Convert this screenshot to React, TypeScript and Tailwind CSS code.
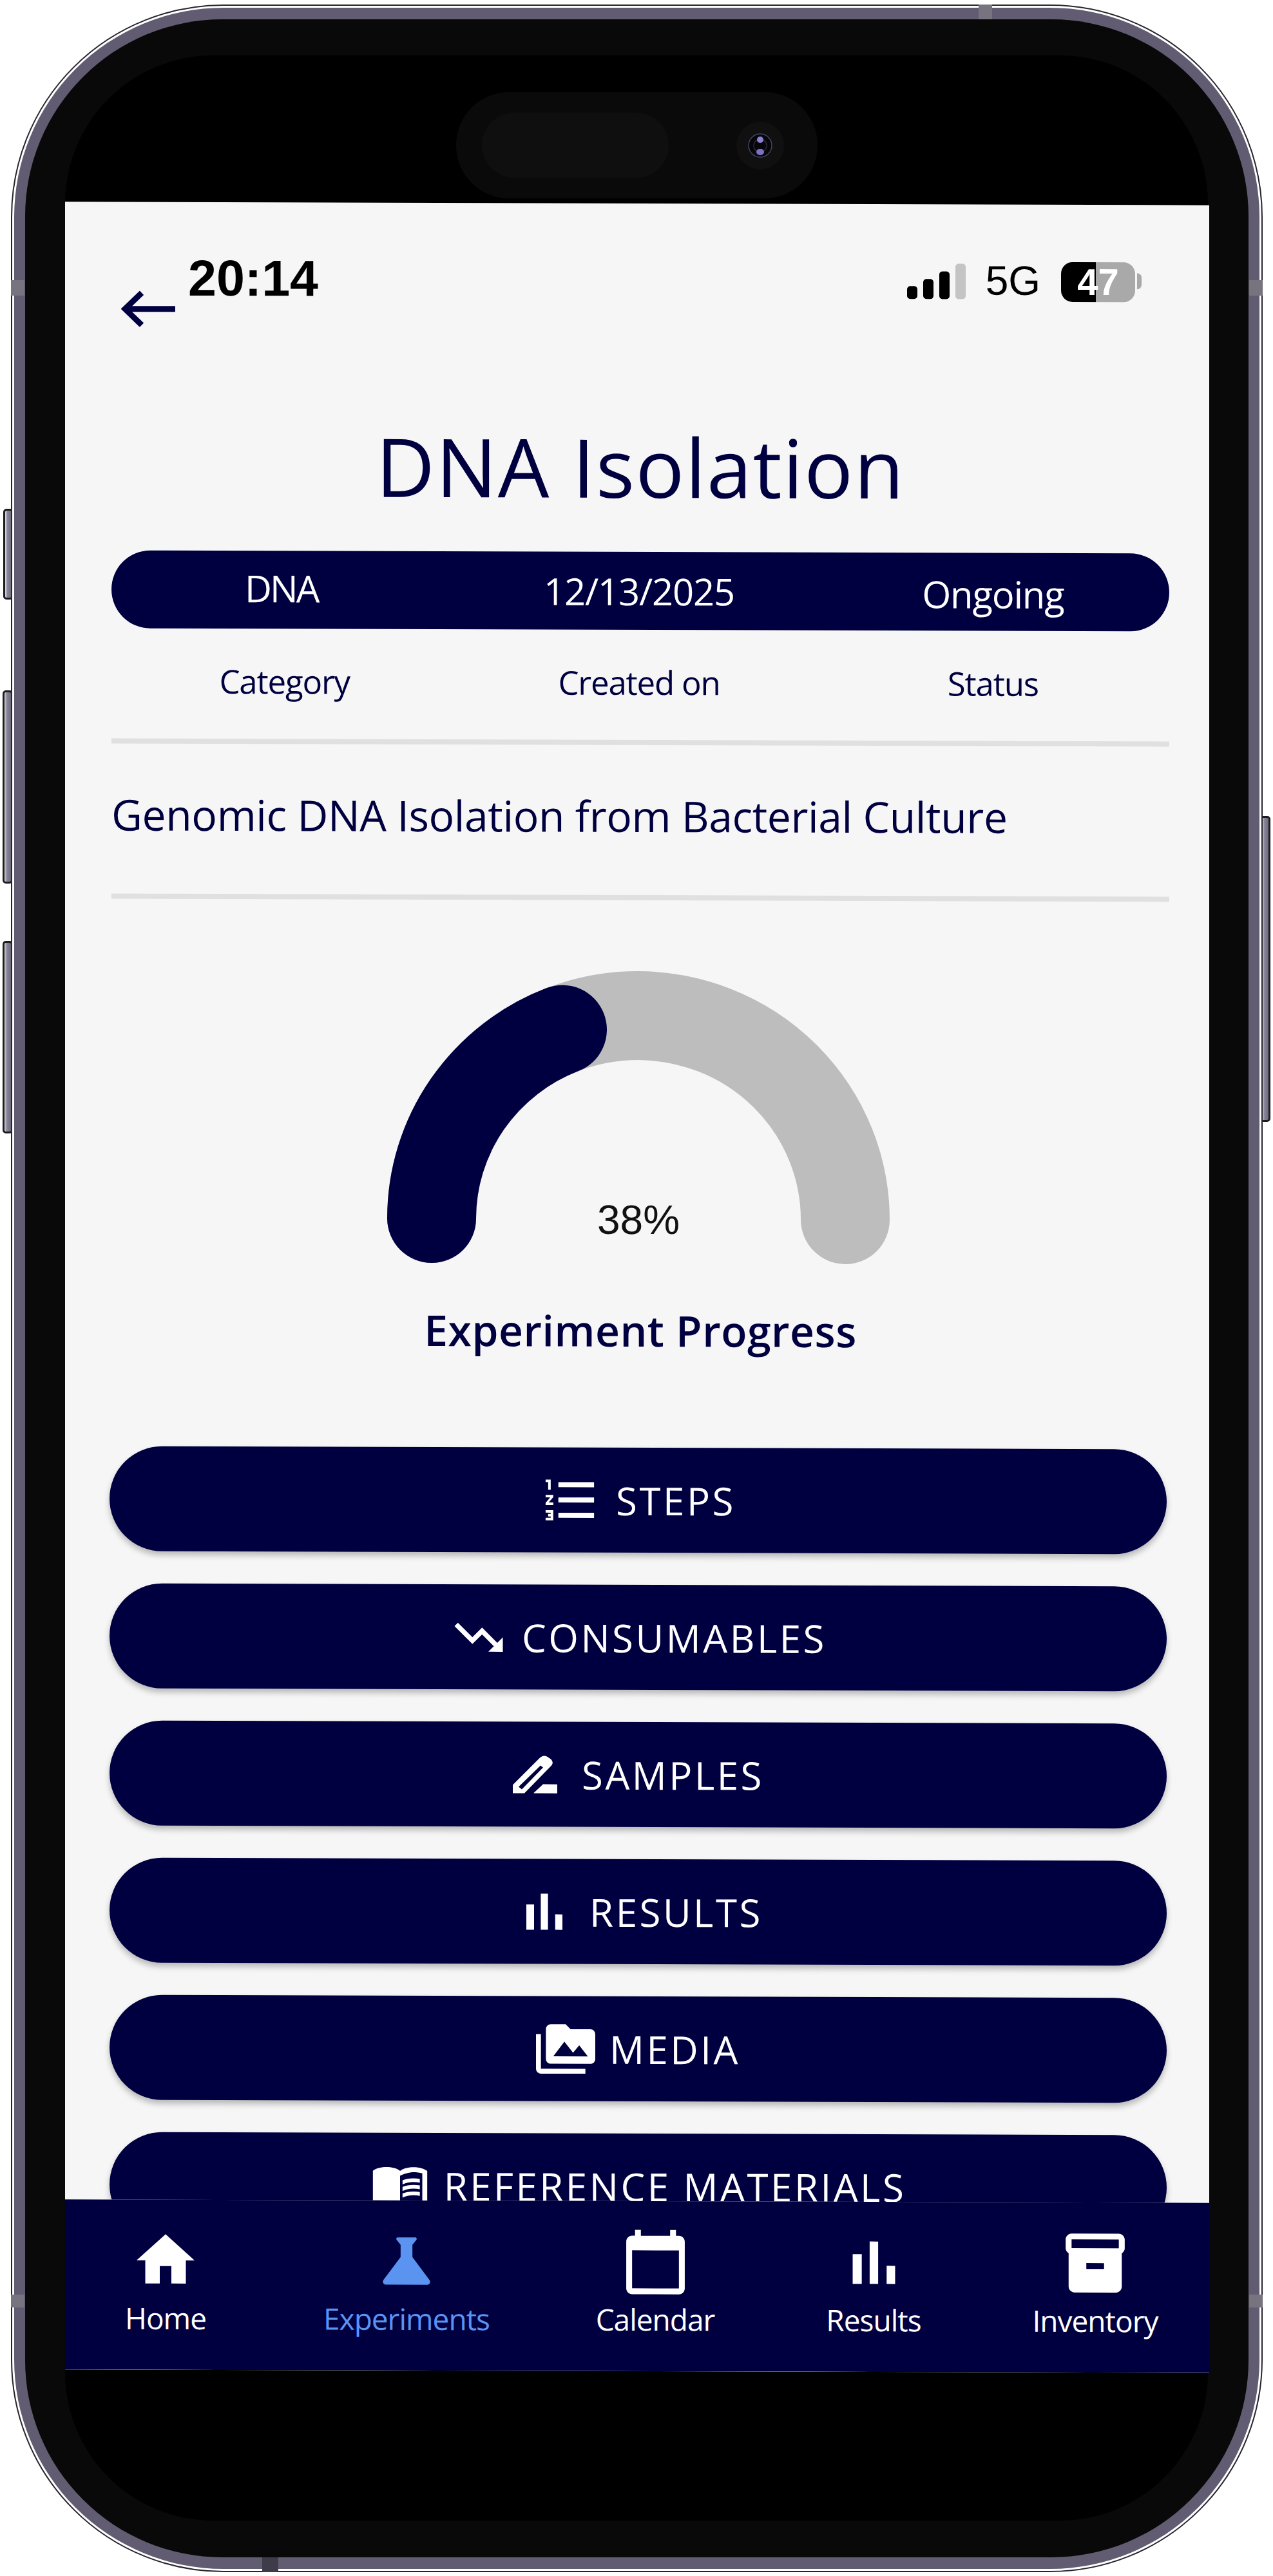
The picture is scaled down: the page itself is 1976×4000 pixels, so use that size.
import { ReactNode } from 'react'
import {
  MdFormatListNumbered,
  MdTrendingDown,
  MdPermMedia,
  MdMenuBook,
  MdHome,
  MdScience,
  MdCalendarToday,
  MdInventory2,
} from 'react-icons/md'

function BarChart({ size }: { size: number }) {
  return (
    <svg width={size} height={size} viewBox="0 0 24 24" fill="currentColor">
      <path d="M5 9.2h3V19H5zM10.6 5h2.8v14h-2.8zm5.6 8H19v6h-2.8z" />
    </svg>
  )
}

function PencilIcon() {
  return (
    <svg width="71" height="61" viewBox="18 15 71 61" fill="currentColor" fillRule="evenodd" className="mr-[15px]">
      <path d="M19 62 L60 21 Q66 15 72 18 L78 22 Q83 27 79 32 L37 75 H19 Z M28 65 L62 32 L66 35 L33 69 Z" />
      <path d="M51 75 L66 61 H88 V75 Z" />
    </svg>
  )
}

const actions: { label: string; icon: ReactNode }[] = [
  { label: 'STEPS', icon: <MdFormatListNumbered size={95} /> },
  { label: 'CONSUMABLES', icon: <MdTrendingDown size={90} /> },
  { label: 'SAMPLES', icon: <PencilIcon /> },
  { label: 'RESULTS', icon: <BarChart size={96} /> },
  { label: 'MEDIA', icon: <MdPermMedia size={92} /> },
  { label: 'REFERENCE MATERIALS', icon: <MdMenuBook size={92} /> },
]

const tabs: { label: string; icon: ReactNode; active?: boolean }[] = [
  { label: 'Home', icon: <MdHome size={108} /> },
  { label: 'Experiments', icon: <MdScience size={110} />, active: true },
  { label: 'Calendar', icon: <MdCalendarToday size={109} /> },
  { label: 'Results', icon: <BarChart size={113} /> },
  { label: 'Inventory', icon: <MdInventory2 size={110} /> },
]

function StatusBar() {
  return (
    <div className="absolute left-[191px] right-[105px] top-[78px] flex items-center justify-between text-black font-['Liberation_Sans',sans-serif]">
      <span className="text-[79px] leading-[80px] font-bold">20:14</span>
      <div className="flex items-end">
        <div className="flex items-end gap-[9px]">
          <span className="w-[16px] h-[20px] rounded-[5px] bg-black" />
          <span className="w-[16px] h-[31px] rounded-[5px] bg-black" />
          <span className="w-[16px] h-[43px] rounded-[5px] bg-black" />
          <span className="w-[16px] h-[55px] rounded-[5px] bg-[#c4c4c4]" />
        </div>
        <span className="ml-[31px] mr-[32px] text-[64px] leading-[58px]">5G</span>
        <div className="flex items-center">
          <div className="w-[115px] h-[62px] -mb-[4px] rounded-[18px] flex items-center justify-center bg-[linear-gradient(90deg,#000_47%,#a9a9a9_47%)] text-white text-[58px] leading-[62px] font-bold">
            47
          </div>
          <span className="ml-[3px] w-[7px] h-[25px] rounded-r-full bg-[#a9a9a9]" />
        </div>
      </div>
    </div>
  )
}

function Gauge() {
  return (
    <div className="relative w-[780px] h-[459px] mx-auto -translate-x-[3px]">
      <svg viewBox="0 0 780 459" className="w-full h-full" fill="none">
        <path d="M69 385 A321 316 0 0 1 711 385" stroke="#bdbdbd" strokeWidth="138" strokeLinecap="round" />
        <path d="M69 385 A321 316 0 0 1 272 91" stroke="#000040" strokeWidth="138" strokeLinecap="round" />
      </svg>
      <span className="absolute left-0 right-0 top-[346px] text-center text-[64px] leading-[80px] text-[#111] font-['Liberation_Sans',sans-serif]">
        38%
      </span>
    </div>
  )
}

function Screen() {
  return (
    <div className="relative w-[1776px] h-[3366px] bg-[#f6f6f6] skew-y-[0.17deg] flex flex-col overflow-hidden text-[#000040] font-['Open_Sans',sans-serif]">
      <StatusBar />
      <main className="flex-1 min-h-0 overflow-hidden pt-[138px] pl-[72px] pr-[62px]">
        <svg width="88" height="56" viewBox="0 0 88 56" fill="none" stroke="#000040" strokeWidth="9" className="ml-[15px]">
          <path d="M6 28 H84" />
          <path d="M32 3 L6 28 L32 53" />
        </svg>
        <h1 className="mt-[149px] text-center text-[126px] leading-[130px] font-medium tracking-[1.5px]">DNA Isolation</h1>
        <div className="mt-[68px] h-[121px] rounded-full bg-[#000040] grid grid-cols-3 items-center text-white text-[58px] font-normal tracking-[-1.2px] leading-[70px]">
          <span className="text-center -translate-x-[10px] -translate-y-[3px] tracking-[-3px]">DNA</span>
          <span className="text-center translate-x-[-2px]">12/13/2025</span>
          <span className="text-center translate-y-[3px]">Ongoing</span>
        </div>
        <div className="mt-[46px] h-[70px] grid grid-cols-3 items-center text-[51px] tracking-[-1.2px] leading-[70px]">
          <span className="text-center -translate-x-[5px]">Category</span>
          <span className="text-center translate-x-[-2px]">Created on</span>
          <span className="text-center">Status</span>
        </div>
        <div className="mt-[55px] h-[8px] bg-[#e0e0e0]" />
        <p className="mt-[64px] h-[90px] text-[66px] leading-[90px] tracking-[-0.4px]">Genomic DNA Isolation from Bacterial Culture</p>
        <div className="mt-[79px] h-[8px] bg-[#e0e0e0]" />
        <div className="mt-[110px]">
          <Gauge />
        </div>
        <p className="mt-[58px] h-[80px] text-center text-[66px] leading-[80px] font-semibold tracking-[0.5px]">Experiment Progress</p>
        <div className="mt-[143px] -ml-[3px] w-[1641px] flex flex-col gap-[50px]">
          {actions.map(a => (
            <button
              key={a.label}
              className="h-[163px] shrink-0 rounded-full bg-[#000040] shadow-[0_6px_10px_rgba(0,0,0,0.25)] flex items-center justify-center gap-[22px] text-white text-[60px] leading-[70px] font-medium tracking-[3.5px]"
            >
              {a.icon}
              <span>{a.label}</span>
            </button>
          ))}
        </div>
      </main>
      <nav className="h-[264px] shrink-0 bg-[#000040] grid grid-cols-[312px_436px_336px_342px_346px] pt-[39px] text-white">
        {tabs.map(t => (
          <div key={t.label} className={`flex flex-col items-center ${t.active ? 'text-[#5b93f0]' : ''}`}>
            <div className="h-[110px] flex items-center justify-center">{t.icon}</div>
            <span className="mt-[4px] text-[46px] leading-[60px] tracking-[-1px]">{t.label}</span>
          </div>
        ))}
      </nav>
    </div>
  )
}

function SideButton({ className }: { className: string }) {
  return (
    <div className={`absolute w-[16px] rounded-[5px] border-[3px] border-[#1c1c20] bg-[linear-gradient(90deg,#dcdce4_0,#8b879a_35%,#6d687c_100%)] ${className}`} />
  )
}

export default function App() {
  return (
    <div className="w-[1976px] h-[4000px] bg-white pt-[7px] pl-[17px]">
      <div className="relative w-[1943px] h-[3987px]">
        <SideButton className="-left-[12px] top-[783px] h-[141px]" />
        <SideButton className="-left-[13px] top-[1065px] h-[300px]" />
        <SideButton className="-left-[13px] top-[1454px] h-[299px]" />
        <SideButton className="-right-[12px] top-[1260px] h-[475px]" />

        {/* frame: dark hairline, bright edge, then the metal band */}
        <div className="relative w-full h-full rounded-[330px] bg-white border-[2px] border-[#26262c] p-[3px]">
          <div className="w-full h-full rounded-[325px] bg-[#625c72] p-[17px] pt-[18px] pb-[18px]">
            <div className="w-full h-full rounded-[306px] bg-[#090909] pt-[56px] pb-[57px] pl-[62px] pr-[63px]">
              <div className="w-full h-full rounded-[230px] bg-black flex flex-col">
                <div className="h-[230px] shrink-0 pt-[57px] flex justify-center">
                  <div className="w-[561px] h-[165px] rounded-[82px] bg-[#0a0a0a] flex items-center pl-[40px]">
                    <div className="w-[290px] h-[101px] rounded-[50px] bg-[#0f0f0f]" />
                    <svg width="74" height="74" viewBox="0 0 74 74" className="ml-[105px]">
                      <circle cx="37" cy="37" r="37" fill="#101010" />
                      <circle cx="37" cy="37" r="18" fill="#05050a" stroke="#3d4760" strokeWidth="1.5" />
                      <circle cx="37" cy="37" r="10" fill="none" stroke="#2a2a3a" strokeWidth="1.5" />
                      <circle cx="37" cy="28" r="5" fill="#8f7fd0" />
                      <ellipse cx="37" cy="47" rx="6" ry="5" fill="#7f70c0" />
                    </svg>
                  </div>
                </div>
                <Screen />
              </div>
            </div>
          </div>
        </div>

        {/* antenna bands */}
        <div className="absolute left-[1502px] top-0 w-[21px] h-[23px] bg-[#77737f]" />
        <div className="absolute left-[390px] bottom-0 w-[25px] h-[23px] bg-[#3d3c48]" />
        <div className="absolute left-0 top-[428px] w-[21px] h-[24px] bg-[#77737f]" />
        <div className="absolute right-0 top-[428px] w-[21px] h-[24px] bg-[#77737f]" />
        <div className="absolute left-0 top-[3556px] w-[21px] h-[20px] bg-[#77737f]" />
        <div className="absolute right-0 top-[3556px] w-[21px] h-[20px] bg-[#77737f]" />
      </div>
    </div>
  )
}
